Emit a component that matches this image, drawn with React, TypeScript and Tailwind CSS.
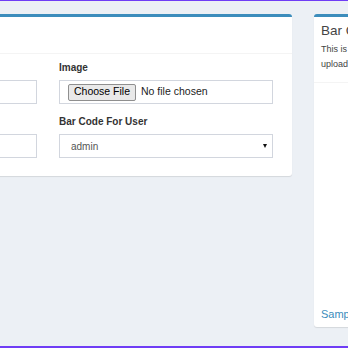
import React from "react";

const font = { fontFamily: '"Liberation Sans", Arial, sans-serif' };

function Label({ children }: { children: React.ReactNode }) {
  return (
    <label className="block h-[14px] mb-[5px] text-[10px] leading-[14px] font-bold text-[#333]">
      {children}
    </label>
  );
}

function TextBox() {
  return <div className="h-[24px] w-full border border-[#d2d6de] bg-white" />;
}

export default function App() {
  return (
    <div
      className="w-[348px] h-[348px] overflow-hidden bg-[#ecf0f5] border-t border-[#6f3df5] border-b-2 flex flex-col"
      style={font}
    >
      <div className="flex items-start mt-[13px] flex-1">
        {/* Form card (left part is scrolled out of view) */}
        <div className="shrink-0 w-[488px] -ml-[196px] bg-white border-t-[3px] border-[#3c8dbc] rounded-[3px] shadow-[0_1px_1px_rgba(0,0,0,0.1)]">
          <div className="h-[37px] border-b border-[#f4f4f4]" />
          <div className="px-[19px] pt-[7px] pb-[7px] grid grid-cols-2 gap-x-[22px]">
            <div>
              <div className="mb-[11px]">
                <div className="h-[14px] mb-[5px]" />
                <TextBox />
              </div>
              <div className="mb-[11px]">
                <div className="h-[14px] mb-[5px]" />
                <TextBox />
              </div>
            </div>
            <div>
              <div className="mb-[11px]">
                <Label>Image</Label>
                <div className="h-[24px] border border-[#d2d6de] flex items-center pl-[8px]">
                  <span className="h-[17px] px-[5px] flex items-center border border-[#8f8f8f] rounded-[2px] bg-[#e9e9e9] text-[10.5px] text-black">
                    Choose File
                  </span>
                  <span className="ml-[5px] text-[10.5px] text-[#222]">No file chosen</span>
                </div>
              </div>
              <div className="mb-[11px]">
                <Label>Bar Code For User</Label>
                <div className="h-[24px] border border-[#d2d6de] flex items-center justify-between pl-[11px] pr-[5px]">
                  <span className="text-[10px] text-[#555]">admin</span>
                  <svg width="4" height="4" viewBox="0 0 4 4">
                    <path d="M0 0h4L2 4z" fill="#111" />
                  </svg>
                </div>
              </div>
            </div>
          </div>
        </div>

        {/* Bar code help card */}
        <div className="shrink-0 w-[200px] ml-[22px] h-[313px] bg-white border-t-[3px] border-[#3c8dbc] rounded-[3px] shadow-[0_1px_1px_rgba(0,0,0,0.1)] flex flex-col">
          <div className="px-[7px] pt-[7px] pb-[10px] border-b border-[#f4f4f4]">
            <h3 className="text-[13.5px] leading-[14px] text-[#444] whitespace-nowrap">Bar Code Format</h3>
            <p className="mt-[4px] text-[9px] leading-[15px] text-[#444] whitespace-nowrap">
              This is the sample bar code format for user
              <br />
              upload
            </p>
          </div>
          <div className="flex-1 flex flex-col justify-end px-[7px] pb-[5px]">
            <a className="text-[11px] leading-[15px] text-[#3c8dbc] whitespace-nowrap">Sample File</a>
          </div>
        </div>
      </div>
    </div>
  );
}
